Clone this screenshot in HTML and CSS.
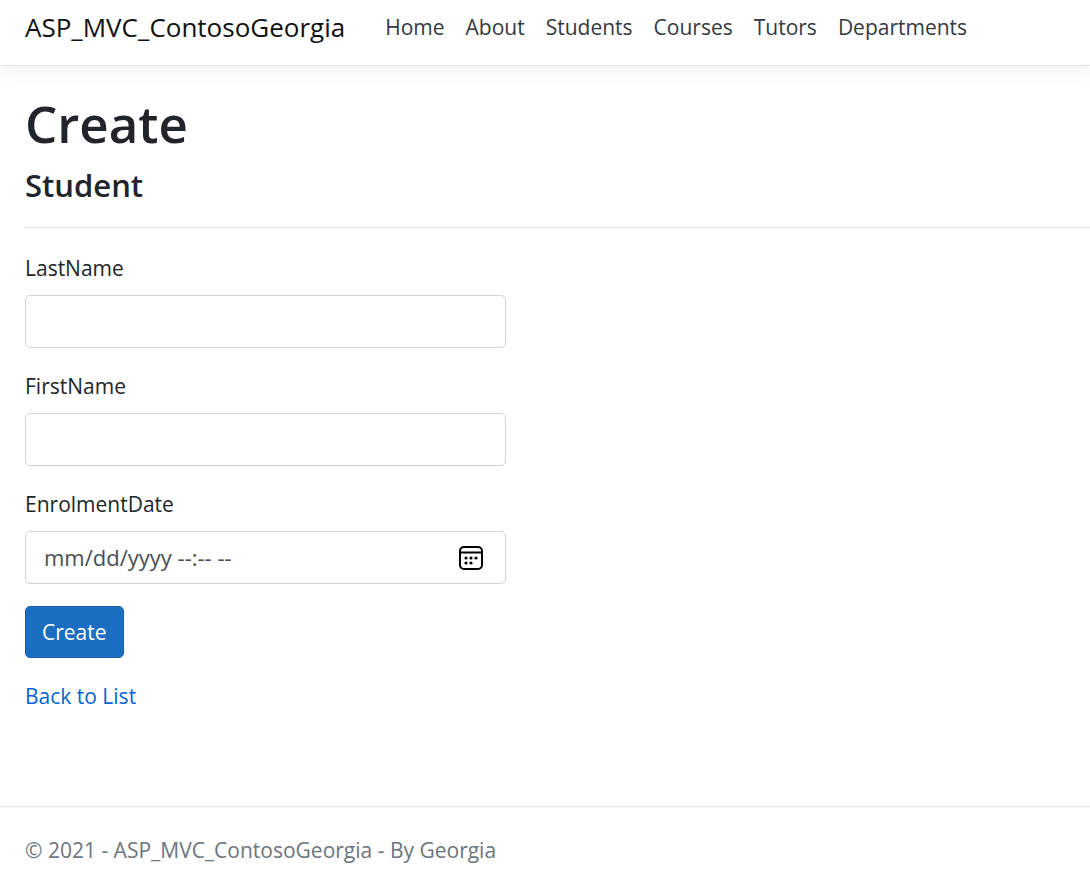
FILE: index.html
```html
<!DOCTYPE html>
<html lang="en">
<head>
<meta charset="utf-8">
<meta name="viewport" content="width=device-width, initial-scale=1">
<title>Create - ASP_MVC_ContosoGeorgia</title>
<link rel="stylesheet" href="styles.css">
</head>
<body>
<header class="site-header">
  <a class="brand" href="#">ASP_MVC_ContosoGeorgia</a>
  <nav class="site-nav">
    <a href="#">Home</a>
    <a href="#">About</a>
    <a href="#">Students</a>
    <a href="#">Courses</a>
    <a href="#">Tutors</a>
    <a href="#">Departments</a>
  </nav>
</header>
<main class="content">
  <h1>Create</h1>
  <h2>Student</h2>
  <hr>
  <div class="columns">
    <form class="student-form">
      <div class="field">
        <label for="last-name">LastName</label>
        <input class="control" id="last-name" type="text">
      </div>
      <div class="field">
        <label for="first-name">FirstName</label>
        <input class="control" id="first-name" type="text">
      </div>
      <div class="field">
        <label for="enrolment-date">EnrolmentDate</label>
        <div class="control date-control">
          <input id="enrolment-date" type="text" placeholder="mm/dd/yyyy --:-- --">
          <button class="picker" type="button" aria-label="Show date picker">
            <svg viewBox="0 0 24 24" width="24" height="24" aria-hidden="true">
              <rect x="1" y="1" width="22" height="22" rx="4" fill="none" stroke="#000" stroke-width="2"/>
              <path d="M1 6.5H23" stroke="#000" stroke-width="2"/>
              <g fill="#000"><circle cx="7" cy="12" r="1.6"/><circle cx="12" cy="12" r="1.6"/><circle cx="17" cy="12" r="1.6"/><circle cx="7" cy="17" r="1.6"/><circle cx="12" cy="17" r="1.6"/></g>
            </svg>
          </button>
        </div>
      </div>
      <button class="submit" type="submit">Create</button>
    </form>
  </div>
  <a class="back" href="#">Back to List</a>
</main>
<footer class="site-footer">© 2021 - ASP_MVC_ContosoGeorgia - By Georgia</footer>
</body>
</html>
```
FILE: styles.css
```css
* { box-sizing: border-box; }
body {
  margin: 0;
  min-height: 100vh;
  display: flex;
  flex-direction: column;
  background: #fff;
  color: #212529;
  font: 21px/33px "Segoe UI", "Open Sans", sans-serif;
}
a { text-decoration: none; }
.site-header {
  display: flex;
  align-items: center;
  gap: 40px;
  padding: 0 25px 10px;
  min-height: 66px;
  border-bottom: 1px solid #dee2e6;
  box-shadow: 0 6px 17px rgba(0, 0, 0, 0.05);
}
.brand { color: #111; font-size: 26px; }
.site-nav { display: flex; gap: 21px; }
.site-nav a { color: #343a40; }
.content { flex: 1; padding: 24px 0 0 25px; }
h1, h2 { margin: 0; font-weight: 600; }
h1 { font-size: 51px; line-height: 66px; }
h2 { font-size: 31px; line-height: 40px; margin: 9px 0 22px; }
hr { margin: 0 0 24px; border: 0; border-top: 1px solid #e5e5e5; }
.columns { display: grid; grid-template-columns: 14fr 17fr; }
.field { margin-bottom: 22px; }
label { display: block; margin-bottom: 10px; padding-bottom: 1px; }
.field label { padding: 0; }
.control {
  display: block;
  width: 100%;
  height: 53px;
  padding: 0 18px;
  border: 1px solid #ced4da;
  border-radius: 5px;
  background: #fff;
  color: #495057;
  font: inherit;
}
.date-control { display: flex; align-items: center; padding-right: 22px; }
.date-control input {
  flex: 1;
  min-width: 0;
  padding: 0;
  border: 0;
  outline: 0;
  background: none;
  color: #495057;
  font: inherit;
  font-size: 22px;
}
.date-control input::placeholder { color: #495057; opacity: 1; }
.picker { display: flex; padding: 0; border: 0; background: none; }
.submit {
  display: block;
  height: 52px;
  padding: 0 16px;
  border: 1px solid #1861ac;
  border-radius: 5px;
  background: #1b6ec2;
  color: #fff;
  font: inherit;
}
.back { display: inline-block; margin-top: 22px; color: #0366d6; }
.site-footer {
  padding: 27px 25px 9px;
  border-top: 1px solid #dee2e6;
  color: #6c757d;
}
```
